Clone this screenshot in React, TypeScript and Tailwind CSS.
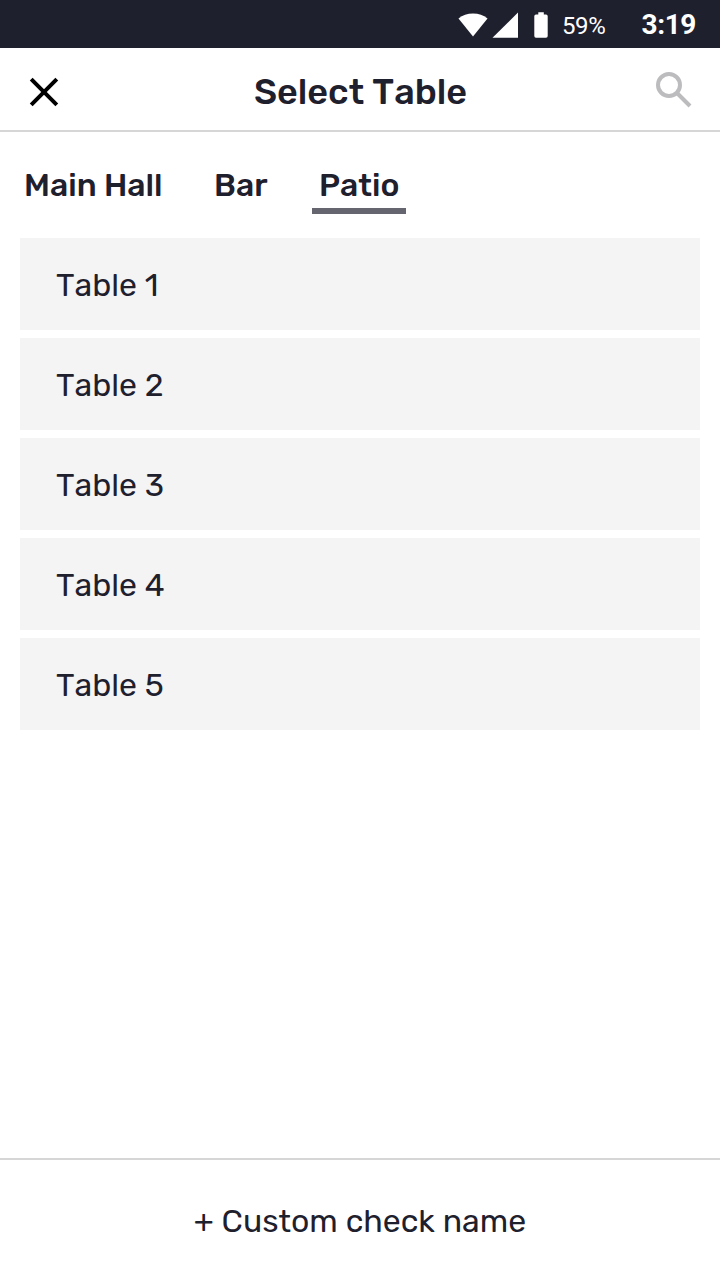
const tables = ["Table 1", "Table 2", "Table 3", "Table 4", "Table 5"];

function StatusBar() {
  return (
    <div className="flex h-12 shrink-0 items-center bg-[#1f202d] pl-[458px] font-['Roboto',sans-serif] text-white">
      <svg className="h-12 w-[94px]" viewBox="0 0 94 48" fill="currentColor">
        <path d="M.5 18.500Q6.500 13.500 15 13.500T29.500 18.500L15 36.500Z" />
        <path d="M60 12.500V37.700H34.500Z" />
        <path d="M80.300 12.300h5.500v2.200h2.200a1.700 1.700 0 0 1 1.700 1.700v19.800a1.700 1.700 0 0 1-1.700 1.700H78a1.700 1.700 0 0 1-1.700-1.700V16.200a1.700 1.700 0 0 1 1.700-1.700h2.300z" />
      </svg>
      <span className="ml-[10px] mt-[3px] w-[79.500px] text-[24px] leading-none tracking-[-0.4px]">59%</span>
      <span className="mt-px text-[28px] font-bold leading-none tracking-[-0.4px]">3:19</span>
    </div>
  );
}

function Header() {
  return (
    <header className="flex h-[84px] shrink-0 items-center justify-between border-b-2 border-[#d6d6d6] px-7">
      <button aria-label="Close" className="mt-[6px] h-8 w-9">
        <svg className="h-8 w-8" viewBox="0 0 32 32" fill="none" stroke="#000" strokeWidth="4">
          <path d="M3.200 3.200 28.800 28.800M28.800 3.200 3.200 28.800" />
        </svg>
      </button>
      <h1 className="ml-px mt-[6px] text-[36px] font-medium leading-none">Select Table</h1>
      <button aria-label="Search" className="mt-0.5 h-9 w-9">
        <svg className="h-9 w-9" viewBox="0 0 36 36" fill="none" stroke="#bcbcbf" strokeWidth="4">
          <circle cx="13" cy="13" r="11" />
          <path d="m21.500 21.500 12.500 12.500" />
        </svg>
      </button>
    </header>
  );
}

export default function App() {
  return (
    <div className="flex h-[1280px] w-[720px] flex-col overflow-hidden bg-white font-['Rubik','Roboto',sans-serif] text-[#1f202d] antialiased [font-kerning:none]">
      <StatusBar />
      <Header />
      <nav className="flex h-[82px] shrink-0 pl-6 pt-[37px] text-[32px] font-medium leading-8">
        <div className="w-[190px] whitespace-nowrap">Main Hall</div>
        <div className="w-[98px]">Bar</div>
        <div className="h-[45px] w-[94px] border-b-6 border-[#656570] pl-[7px]">Patio</div>
      </nav>
      <ul className="flex grow flex-col gap-2 px-5 pt-6">
        {tables.map((name) => (
          <li key={name} className="flex h-[92px] items-center rounded-none bg-[#f4f4f4] pl-9 pt-px text-[32px] font-[370]">
            {name}
          </li>
        ))}
      </ul>
      <footer className="flex h-[122px] shrink-0 items-center justify-center border-t-2 border-[#d6d6d6] pt-0.5 text-[32px]">
        <button className="font-[370]">+ Custom check name</button>
      </footer>
    </div>
  );
}
